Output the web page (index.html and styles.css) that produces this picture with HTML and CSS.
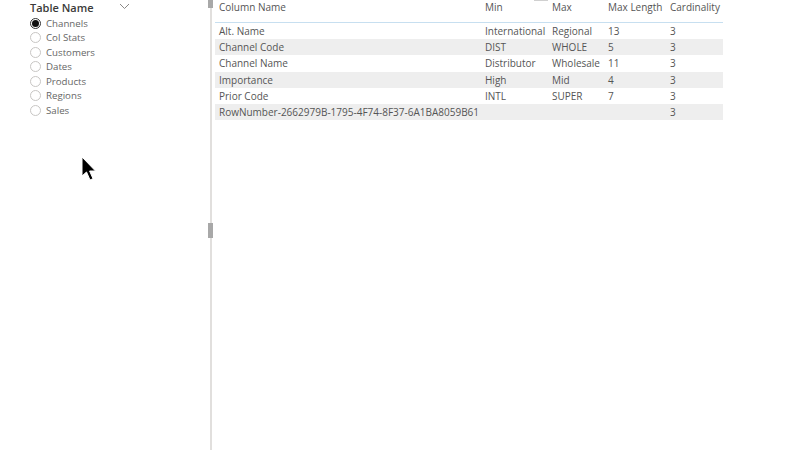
FILE: index.html
```
<!DOCTYPE html>
<html>
<head>
<meta charset="utf-8">
<link rel="stylesheet" href="styles.css">
</head>
<body>
<div class="page">
  <aside class="slicer">
    <div class="slicer-head">
      <span class="slicer-title">Table Name</span>
      <svg class="chev" width="11" height="7" viewBox="0 0 11 7"><path d="M1 1 L5.5 5.5 L10 1" fill="none" stroke="#8a8886" stroke-width="1"/></svg>
    </div>
    <ul class="opts">
      <li class="opt on"><span class="radio"></span>Channels</li>
      <li class="opt"><span class="radio"></span>Col Stats</li>
      <li class="opt"><span class="radio"></span>Customers</li>
      <li class="opt"><span class="radio"></span>Dates</li>
      <li class="opt"><span class="radio"></span>Products</li>
      <li class="opt"><span class="radio"></span>Regions</li>
      <li class="opt"><span class="radio"></span>Sales</li>
    </ul>
  </aside>
  <div class="divider">
    <span class="grip top"></span>
    <span class="grip mid"></span>
  </div>
  <main class="tablearea">
    <span class="tick"></span>
    <div class="grid">
      <div class="row head">
        <span>Column Name</span><span>Min</span><span>Max</span><span>Max Length</span><span>Cardinality</span>
      </div>
      <div class="row"><span>Alt. Name</span><span>International</span><span>Regional</span><span>13</span><span>3</span></div>
      <div class="row alt"><span>Channel Code</span><span>DIST</span><span>WHOLE</span><span>5</span><span>3</span></div>
      <div class="row"><span>Channel Name</span><span>Distributor</span><span>Wholesale</span><span>11</span><span>3</span></div>
      <div class="row alt"><span>Importance</span><span>High</span><span>Mid</span><span>4</span><span>3</span></div>
      <div class="row"><span>Prior Code</span><span>INTL</span><span>SUPER</span><span>7</span><span>3</span></div>
      <div class="row alt"><span>RowNumber-2662979B-1795-4F74-8F37-6A1BA8059B61</span><span></span><span></span><span></span><span>3</span></div>
    </div>
  </main>
  <svg class="cursor" width="16" height="26" viewBox="0 0 16 26"><path d="M1 1 L1 20 L5.5 16 L9 24 L12 22.7 L8.6 15 L14.5 15 Z" fill="#000" stroke="#fff" stroke-width="1"/></svg>
</div>
</body>
</html>
```
FILE: styles.css
```
* { box-sizing: border-box; margin: 0; padding: 0; }
html, body { width: 800px; height: 450px; background: #fff; overflow: hidden; }
body { font-family: "Segoe UI", "Open Sans", "Noto Sans", sans-serif; color: #605e5c; }
.page { position: relative; display: flex; width: 800px; height: 450px; }
.slicer { width: 210px; padding: 0 0 0 30px; }
.slicer-head { display: flex; align-items: center; justify-content: space-between; width: 100px; height: 15px; }
.slicer-title { font-size: 11px; font-weight: 600; color: #3b3a39; }
.chev { margin-top: -2px; }
.opts { list-style: none; margin-top: 1px; }
.opt { display: flex; align-items: center; height: 14.5px; font-size: 9.7px; color: #666; }
.radio { width: 11px; height: 11px; border-radius: 50%; border: 1px solid #c8c6c4; margin-right: 5px; flex: none; display: flex; align-items: center; justify-content: center; }
.opt.on .radio { border-color: #333; }
.opt.on .radio::after { content: ""; width: 7px; height: 7px; border-radius: 50%; background: #111; }
.divider { position: relative; width: 2px; height: 450px; background: #e1dfdd; flex: none; }
.grip { position: absolute; left: -2px; width: 5px; background: #a8a8a8; }
.grip.top { top: 0; height: 8px; }
.grip.mid { top: 223px; height: 15px; }
.tablearea { position: relative; flex: 1; padding-left: 3px; }
.tick { position: absolute; left: 322px; top: 0; width: 14px; height: 1px; background: #d0d0d0; }
.grid { width: 508px; font-size: 10px; color: #555; }
.row { display: grid; grid-template-columns: 266px 67px 56px 62px 57px; height: 16.2px; align-items: center; }
.row span { padding-left: 4px; white-space: nowrap; }
.row.head { height: 23px; border-bottom: 1px solid #c7dff0; padding-bottom: 8px; }
.row.alt { background: #eeeeee; }
.cursor { position: absolute; left: 81px; top: 156px; }
```
